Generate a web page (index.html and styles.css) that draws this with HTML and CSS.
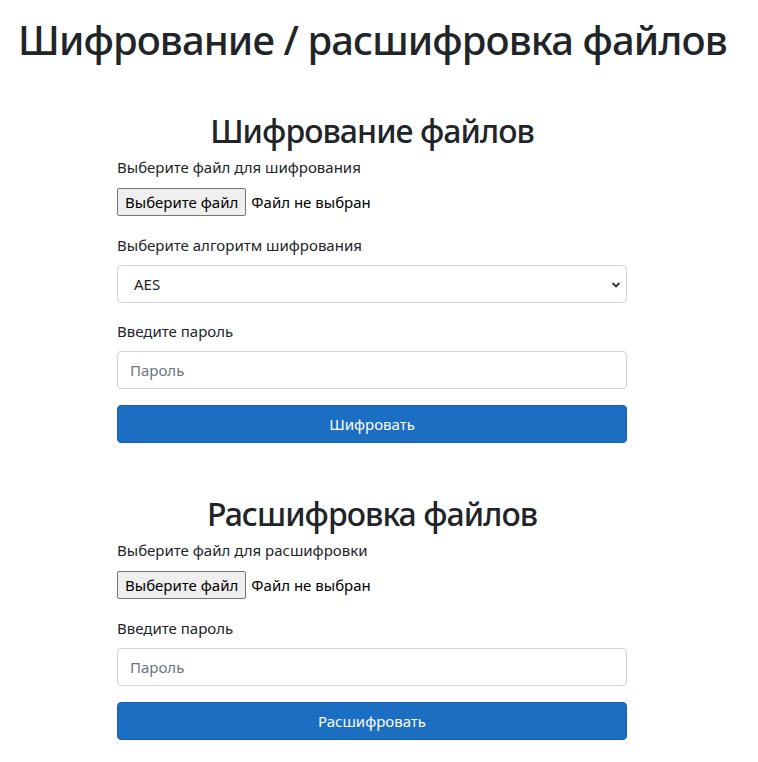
FILE: index.html
```html
<!DOCTYPE html>
<html lang="ru">
<head>
<meta charset="utf-8">
<title>Шифрование / расшифровка файлов</title>
<link rel="stylesheet" href="styles.css">
</head>
<body>
<main class="page">
  <h1 class="title">Шифрование / расшифровка файлов</h1>

  <section class="panel">
    <h2 class="panel-title">Шифрование файлов</h2>
    <div class="field">
      <label class="field-label">Выберите файл для шифрования</label>
      <div class="file-picker">
        <span class="file-btn">Выберите файл</span>
        <span class="file-status">Файл не выбран</span>
      </div>
    </div>
    <div class="field">
      <label class="field-label">Выберите алгоритм шифрования</label>
      <div class="select-wrap">
        <select class="control select">
          <option>AES</option>
        </select>
        <svg class="chevron" width="10" height="8" viewBox="0 0 10 8" aria-hidden="true"><path d="M1.5 2 L5 5.5 L8.5 2" fill="none" stroke="#333" stroke-width="1.8"/></svg>
      </div>
    </div>
    <div class="field">
      <label class="field-label">Введите пароль</label>
      <input class="control" type="password" placeholder="Пароль">
    </div>
    <button class="btn-primary" type="button">Шифровать</button>
  </section>

  <section class="panel">
    <h2 class="panel-title">Расшифровка файлов</h2>
    <div class="field">
      <label class="field-label">Выберите файл для расшифровки</label>
      <div class="file-picker">
        <span class="file-btn">Выберите файл</span>
        <span class="file-status">Файл не выбран</span>
      </div>
    </div>
    <div class="field">
      <label class="field-label">Введите пароль</label>
      <input class="control" type="password" placeholder="Пароль">
    </div>
    <button class="btn-primary" type="button">Расшифровать</button>
  </section>
</main>
</body>
</html>
```

FILE: styles.css
```css
* { box-sizing: border-box; }

html, body {
  margin: 0;
  background: #fff;
}

body {
  font-family: "Noto Sans", "Open Sans", sans-serif;
  font-size: 16px;
  line-height: 1.5;
  color: #212529;
}

.page {
  display: flex;
  flex-direction: column;
  padding: 16px 0 0 18px;
}

.title {
  margin: 0;
  font-size: 40px;
  font-weight: 500;
  line-height: 48px;
  letter-spacing: -0.9px;
}

.panel {
  width: 510px;
  margin-left: 99px;
  display: flex;
  flex-direction: column;
  margin-top: 51px;
}

.panel + .panel {
  margin-top: 55px;
}

.panel-title {
  margin: 0 0 8px;
  text-align: center;
  font-size: 32px;
  font-weight: 500;
  line-height: 32px;
  letter-spacing: -0.95px;
}

.field {
  display: flex;
  flex-direction: column;
  margin-bottom: 16px;
}

.field-label {
  margin-bottom: 8px;
  font-size: 15px;
  line-height: 24px;
}

.file-picker {
  display: flex;
  align-items: center;
  height: 30px;
  font-size: 15px;
}

.file-btn {
  height: 28px;
  padding: 0 7px;
  display: flex;
  align-items: center;
  background: #efefef;
  border: 1px solid #767676;
  border-radius: 2px;
  color: #000;
}

.file-status {
  margin-left: 5px;
  color: #000;
}

.control {
  display: block;
  width: 100%;
  height: 38px;
  padding: 6px 12px;
  font-family: inherit;
  font-size: 15px;
  line-height: 24px;
  color: #495057;
  background: #fff;
  border: 1px solid #ced4da;
  border-radius: 4px;
  outline: none;
}

.control::placeholder {
  color: #6c757d;
}

.select-wrap {
  position: relative;
}

.select {
  appearance: none;
  -webkit-appearance: none;
  padding-left: 16px;
  color: #212529;
}

.chevron {
  position: absolute;
  right: 6px;
  top: 16px;
  pointer-events: none;
}

.btn-primary {
  height: 38px;
  width: 100%;
  font-family: inherit;
  font-size: 15px;
  line-height: 24px;
  color: #fff;
  background: #1b6ec2;
  border: 1px solid #1861ac;
  border-radius: 4px;
}
```
